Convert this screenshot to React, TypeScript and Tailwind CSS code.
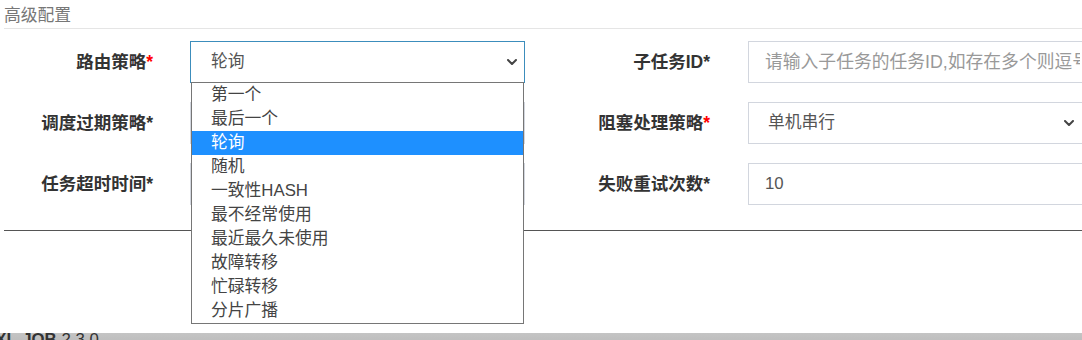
import React from "react";

const FONT = '"Liberation Sans", "Noto Sans CJK SC", sans-serif';

function Chevron({ className }: { className: string }) {
  return (
    <svg
      className={className}
      width="10"
      height="6"
      viewBox="0 0 10 6"
      fill="none"
      stroke="#444"
      strokeWidth="2"
      strokeLinecap="round"
      strokeLinejoin="round"
    >
      <polyline points="1,1 5,5 9,1" />
    </svg>
  );
}

function Label({ text, red }: { text: string; red?: boolean }) {
  return (
    <span className="font-bold text-[#333] text-[17.5px] whitespace-nowrap">
      {text}
      <span className={red ? "text-[#ff0000]" : "text-[#333]"}>*</span>
    </span>
  );
}

const options = [
  "第一个",
  "最后一个",
  "轮询",
  "随机",
  "一致性HASH",
  "最不经常使用",
  "最近最久未使用",
  "故障转移",
  "忙碌转移",
  "分片广播",
];

export default function App() {
  return (
    <div
      className="w-[1082px] h-[340px] overflow-hidden bg-white flex flex-col"
      style={{ fontFamily: FONT }}
    >
      <div className="ml-[4px] pt-[4px] border-b border-[#e5e5e5] shrink-0">
        <div className="h-[24px] leading-[24px] text-[16.8px] text-[#777]">高级配置</div>
      </div>

      <div className="mt-[12px] flex flex-col gap-[19px] shrink-0">
        {/* Row 1 */}
        <div className="flex h-[42px] items-center">
          <div className="w-[153px] shrink-0 text-right">
            <Label text="路由策略" red />
          </div>
          <div className="relative ml-[37px] w-[335px] h-[42px] shrink-0">
            <div className="h-full border border-[#3c8dbc] bg-white flex items-center pl-[20px] text-[16.8px] text-[#555]">
              轮询
            </div>
            <Chevron className="absolute right-[8px] top-[18px]" />
            <div className="absolute left-[1px] top-[41px] w-[333px] border border-[#767676] bg-white z-10">
              {options.map((o) => (
                <div
                  key={o}
                  className={
                    o === "轮询"
                      ? "h-[24px] leading-[24px] pl-[19px] text-[16.8px] bg-[#1e90ff] text-white"
                      : "h-[24px] leading-[24px] pl-[19px] text-[16.8px] text-[#444]"
                  }
                >
                  {o}
                </div>
              ))}
            </div>
          </div>
          <div className="w-[185px] shrink-0 text-right">
            <Label text="子任务ID" />
          </div>
          <div className="ml-[38px] w-[345px] h-[42px] shrink-0">
            <input
              className="w-full h-full border border-[#d2d6de] pl-[16px] pr-[12px] text-[17.8px] text-[#555] placeholder:text-[#999] outline-none"
              placeholder="请输入子任务的任务ID,如存在多个则逗号分隔"
              readOnly
            />
          </div>
        </div>

        {/* Row 2 */}
        <div className="flex h-[42px] items-center">
          <div className="w-[153px] shrink-0 text-right">
            <Label text="调度过期策略" />
          </div>
          <div className="ml-[37px] w-[335px] h-[42px] shrink-0 border border-[#d2d6de]" />
          <div className="w-[185px] shrink-0 text-right">
            <Label text="阻塞处理策略" red />
          </div>
          <div className="relative ml-[38px] w-[345px] h-[42px] shrink-0">
            <div className="h-full border border-[#d2d6de] flex items-center pl-[19px] text-[16.8px] text-[#555]">
              单机串行
            </div>
            <Chevron className="absolute right-[19px] top-[18px]" />
          </div>
        </div>

        {/* Row 3 */}
        <div className="flex h-[42px] items-center">
          <div className="w-[153px] shrink-0 text-right">
            <Label text="任务超时时间" />
          </div>
          <div className="ml-[37px] w-[335px] h-[42px] shrink-0 border border-[#d2d6de]" />
          <div className="w-[185px] shrink-0 text-right">
            <Label text="失败重试次数" />
          </div>
          <div className="ml-[38px] w-[345px] h-[42px] shrink-0 border border-[#d2d6de] flex items-center pl-[16px] text-[16.8px] text-[#555]">
            10
          </div>
        </div>
      </div>

      <div className="ml-[4px] mt-[25px] h-px bg-[#555] shrink-0" />

      <div className="mt-[102px] h-[40px] shrink-0 bg-gradient-to-b from-[#c4c4c4] to-[#a4a4a4]">
        <div className="-mt-[2px] ml-[-16px] leading-[17px] text-[16.8px] text-[#333] whitespace-nowrap">
          <span className="font-bold">XXL-JOB</span> 2.3.0
        </div>
      </div>
    </div>
  );
}
